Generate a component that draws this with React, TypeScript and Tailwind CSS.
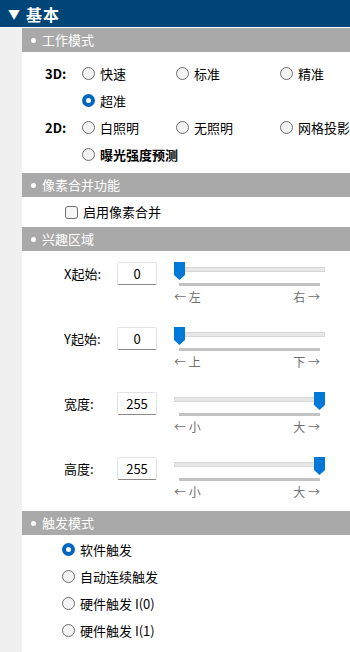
import React from "react"

const font = { fontFamily: '"Noto Sans CJK SC", "Noto Sans", sans-serif' }

function SectionBar({ title }: { title: string }) {
  return (
    <div className="h-[24px] bg-[#a9a9a9] flex items-center pl-[9px] text-white text-[13px]">
      <span className="w-[5px] h-[5px] rounded-full bg-white mr-[6px]" />
      <span>{title}</span>
    </div>
  )
}

function Radio({ label, checked, bold }: { label: string; checked?: boolean; bold?: boolean }) {
  return (
    <div className="flex items-center">
      {checked ? (
        <span className="w-[13px] h-[13px] rounded-full bg-[#0067c0] flex items-center justify-center">
          <span className="w-[5px] h-[5px] rounded-full bg-white" />
        </span>
      ) : (
        <span className="w-[13px] h-[13px] rounded-full border border-[#6e6e6e] bg-[#f3f3f3]" />
      )}
      <span className={"ml-[5px] text-[13px] text-black " + (bold ? "font-semibold" : "")}>{label}</span>
    </div>
  )
}

function Thumb() {
  return (
    <svg width="11" height="18" viewBox="0 0 11 18" className="block">
      <polygon points="0,0 11,0 11,13 5.5,18 0,13" fill="#0078d7" />
    </svg>
  )
}

interface RoiProps {
  label: string
  value: string
  atEnd: boolean
  left: string
  right: string
}

function RoiRow({ label, value, atEnd, left, right }: RoiProps) {
  return (
    <div className="h-[65px] flex pt-[11px]">
      <div className="w-[42px] ml-[42px] h-[23px] flex items-center text-[13px] text-black">{label}</div>
      <div className="w-[40px] h-[23px] ml-[11px] border border-[#e3e3e3] border-b-[#8a8a8a] rounded-[2px] flex items-center justify-center text-[13px] text-black">
        {value}
      </div>
      <div className="ml-[17px] w-[151px] flex flex-col">
        <div className="relative h-[18px]">
          <div className="absolute left-0 right-0 top-[5px] h-[5px] bg-[#e7e7e7] border border-[#d6d6d6]" />
          <div className={"absolute top-0 " + (atEnd ? "right-0" : "left-0")}>
            <Thumb />
          </div>
        </div>
        <div className="mt-[3px] mx-[5px] h-[3px] bg-[#c3c3c3]" />
        <div className="mt-[3px] flex justify-between text-[12px] text-[#707070] leading-[16px]">
          <span>← {left}</span>
          <span className="mr-[5px]">{right} →</span>
        </div>
      </div>
    </div>
  )
}

export default function App() {
  return (
    <div className="w-[350px] h-[652px] bg-white flex flex-col overflow-hidden" style={font}>
      <div className="h-[27px] bg-[#004577] flex items-center pl-[8px] text-white font-bold text-[16px]">
        <span className="text-[12px] mr-[6px]">▼</span>
        <span className="tracking-[1px]">基本</span>
      </div>
      <div className="flex flex-1 pt-px">
        <div className="w-[22px] bg-[#f0f0f0]" />
        <div className="flex-1 flex flex-col">
          <SectionBar title="工作模式" />
          <div className="pt-[8px] pb-[5px]">
            <div className="flex items-center h-[27px]">
              <span className="w-[60px] pl-[23px] text-[13px] font-bold text-black">3D:</span>
              <div className="w-[94px]"><Radio label="快速" /></div>
              <div className="w-[104px]"><Radio label="标准" /></div>
              <Radio label="精准" />
            </div>
            <div className="flex items-center h-[27px] pl-[60px]">
              <Radio label="超准" checked />
            </div>
            <div className="flex items-center h-[27px]">
              <span className="w-[60px] pl-[23px] text-[13px] font-bold text-black">2D:</span>
              <div className="w-[94px]"><Radio label="白照明" /></div>
              <div className="w-[104px]"><Radio label="无照明" /></div>
              <Radio label="网格投影" />
            </div>
            <div className="flex items-center h-[27px] pl-[60px]">
              <Radio label="曝光强度预测" bold />
            </div>
          </div>
          <SectionBar title="像素合并功能" />
          <div className="h-[30px] flex items-center pl-[43px]">
            <span className="w-[13px] h-[13px] rounded-[3px] border border-[#6e6e6e] bg-[#f6f6f6]" />
            <span className="ml-[5px] text-[13px] text-black">启用像素合并</span>
          </div>
          <SectionBar title="兴趣区域" />
          <RoiRow label="X起始:" value="0" atEnd={false} left="左" right="右" />
          <RoiRow label="Y起始:" value="0" atEnd={false} left="上" right="下" />
          <RoiRow label="宽度:" value="255" atEnd left="小" right="大" />
          <RoiRow label="高度:" value="255" atEnd left="小" right="大" />
          <SectionBar title="触发模式" />
          <div className="pt-px pl-[40px]">
            <div className="h-[27px] flex items-center"><Radio label="软件触发" checked /></div>
            <div className="h-[27px] flex items-center"><Radio label="自动连续触发" /></div>
            <div className="h-[27px] flex items-center"><Radio label="硬件触发 I(0)" /></div>
            <div className="h-[27px] flex items-center"><Radio label="硬件触发 I(1)" /></div>
          </div>
        </div>
      </div>
    </div>
  )
}
